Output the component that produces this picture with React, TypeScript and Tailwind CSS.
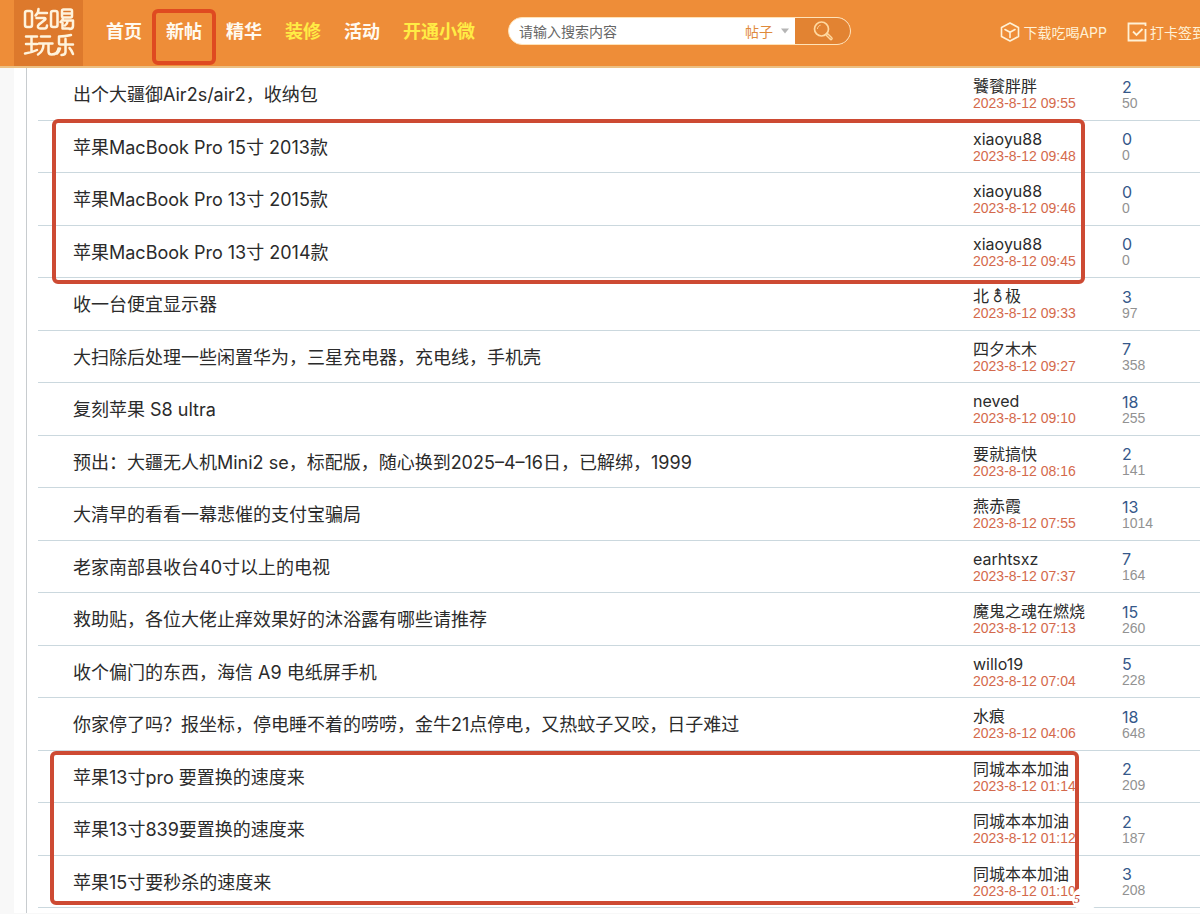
import React from "react";

type Post = {
  title: string;
  author: React.ReactNode;
  time: string;
  replies: number;
  views: number;
};

const posts: Post[] = [
  { title: "出个大疆御Air2s/air2，收纳包", author: "饕餮胖胖", time: "09:55", replies: 2, views: 50 },
  { title: "苹果MacBook Pro 15寸 2013款", author: "xiaoyu88", time: "09:48", replies: 0, views: 0 },
  { title: "苹果MacBook Pro 13寸 2015款", author: "xiaoyu88", time: "09:46", replies: 0, views: 0 },
  { title: "苹果MacBook Pro 13寸 2014款", author: "xiaoyu88", time: "09:45", replies: 0, views: 0 },
  {
    title: "收一台便宜显示器",
    author: (
      <>
        北<span className="inline-block w-[16px] text-center">⚨</span>极
      </>
    ),
    time: "09:33",
    replies: 3,
    views: 97,
  },
  { title: "大扫除后处理一些闲置华为，三星充电器，充电线，手机壳", author: "四夕木木", time: "09:27", replies: 7, views: 358 },
  { title: "复刻苹果 S8 ultra", author: "neved", time: "09:10", replies: 18, views: 255 },
  { title: "预出：大疆无人机Mini2 se，标配版，随心换到2025–4–16日，已解绑，1999", author: "要就搞快", time: "08:16", replies: 2, views: 141 },
  { title: "大清早的看看一幕悲催的支付宝骗局", author: "燕赤霞", time: "07:55", replies: 13, views: 1014 },
  { title: "老家南部县收台40寸以上的电视", author: "earhtsxz", time: "07:37", replies: 7, views: 164 },
  { title: "救助贴，各位大佬止痒效果好的沐浴露有哪些请推荐", author: "魔鬼之魂在燃烧", time: "07:13", replies: 15, views: 260 },
  { title: "收个偏门的东西，海信 A9 电纸屏手机", author: "willo19", time: "07:04", replies: 5, views: 228 },
  { title: "你家停了吗？报坐标，停电睡不着的唠唠，金牛21点停电，又热蚊子又咬，日子难过", author: "水痕", time: "04:06", replies: 18, views: 648 },
  { title: "苹果13寸pro 要置换的速度来", author: "同城本本加油", time: "01:14", replies: 2, views: 209 },
  { title: "苹果13寸839要置换的速度来", author: "同城本本加油", time: "01:12", replies: 2, views: 187 },
  { title: "苹果15寸要秒杀的速度来", author: "同城本本加油", time: "01:10", replies: 3, views: 208 },
];

const navItems = [
  { label: "首页", highlight: false, marked: false },
  { label: "新帖", highlight: false, marked: true },
  { label: "精华", highlight: false, marked: false },
  { label: "装修", highlight: true, marked: false },
  { label: "活动", highlight: false, marked: false },
  { label: "开通小微", highlight: true, marked: false },
];

function Logo() {
  return (
    <a href="#home" aria-label="吃喝玩乐" className="flex h-full w-[69px] shrink-0 items-center justify-center bg-[#dd792c]">
      <svg width="52" height="52" viewBox="0 0 52 52" fill="none" stroke="#fff3dc" strokeWidth="2.5" strokeLinecap="round" strokeLinejoin="round" aria-hidden="true">
        <path d="M4 4h3a2 2 0 0 1 2 2v12a2 2 0 0 1-2 2H4a2 2 0 0 1-2-2V6a2 2 0 0 1 2-2zM15.500 2c0 3-1 5-3 6.500M14.500 6H24M13.500 11h8c1.200 0 1.200 1 .4 1.800L16 17.500c-2 2-1.200 4 1 4h4.500c2 0 2.500-1 2.500-3" />
        <path d="M30 4h2.500a2 2 0 0 1 2 2v12a2 2 0 0 1-2 2H30a2 2 0 0 1-2-2V6a2 2 0 0 1 2-2zM40.500 2.500h7a1.500 1.500 0 0 1 1.500 1.500v5a1.500 1.500 0 0 1-1.500 1.500h-7A1.500 1.500 0 0 1 39 9V4a1.500 1.500 0 0 1 1.500-1.500zM39.500 6.500H49M40 11c0 2-1 3-2.500 4M39.500 13.500H50V19c0 2-1 3-3.500 3M39.500 16v5.500H46M44.500 14.500c0 2-1 3-2.500 4" />
        <path d="M3 29.500h11M3 37h11M8.500 30v14.500M2 46.500c4-.5 8-1.500 12-3.500M18 29.500h9M16 36.500h13.500M20.500 37c0 5-1.500 8-5.500 10.500M25.500 37v7.500c0 2 1 3 3 3 4 0 6.500-2 7-6" />
        <path d="M48 28c-4 1-8 1.500-12 1.500v6.500a1.500 1.500 0 0 0 1.500 1.500H50M42.500 32v13c0 2.200-1.500 3-4 3M37 41.500c-.5 2-1.500 3.500-3 5M46.500 41c1.500 1.500 2.500 3.500 3.500 6" />
      </svg>
    </a>
  );
}

function Header() {
  return (
    <header className="flex h-[68px] items-stretch overflow-hidden border-b-2 border-[#ecc083] bg-[#ee8d38] pl-[14px]">
      <Logo />
      <nav aria-label="主导航" className="ml-[23px] flex shrink-0 items-start gap-[23px] pt-[9px] text-[18px] leading-[46px] font-bold">
        {navItems.map((item) => (
          <a
            key={item.label}
            href={"#" + item.label}
            className={
              (item.marked ? "-mx-[13px] h-[56px] rounded-[6px] border-4 border-[#df4a20] px-[10px] leading-[38px] " : "") +
              (item.highlight ? "text-[#ffec45]" : "text-[#fffaf0]")
            }
          >
            {item.label}
          </a>
        ))}
      </nav>
      <form className="mt-[17px] ml-[33px] flex h-[28px] w-[343px] shrink-0 overflow-hidden rounded-full border border-[#ffe3b8] bg-white" onSubmit={(e) => e.preventDefault()}>
        <input
          aria-label="搜索内容"
          placeholder="请输入搜索内容"
          className="min-w-0 flex-1 pl-[10px] text-[14px] text-[#555] outline-none placeholder:text-[#666]"
        />
        <div className="relative flex items-center">
          <select aria-label="搜索类型" defaultValue="帖子" className="w-[50px] appearance-none bg-transparent text-[14px] text-[#df8a3c] outline-none">
            <option>帖子</option>
          </select>
          <svg className="pointer-events-none absolute right-[6px]" width="8" height="6" viewBox="0 0 8 6" aria-hidden="true">
            <path d="M0 0.500h8L4 5.500z" fill="#b5b5b5" />
          </svg>
        </div>
        <button type="submit" aria-label="搜索" className="flex w-[55px] items-center justify-center bg-[#e28332]">
          <svg width="22" height="22" viewBox="0 0 22 22" fill="none" stroke="#ffd9a0" aria-hidden="true">
            <circle cx="9.500" cy="9" r="7" strokeWidth="1.700" />
            <path d="M5.500 8.500c.3-1.700 1.200-2.700 2.700-3.200" strokeWidth="1" strokeLinecap="round" />
            <path d="M15 14.500l4 4" strokeWidth="3.600" strokeLinecap="round" />
            <path d="M15.500 15l3.300 3.300" stroke="#e28332" strokeWidth="1" strokeLinecap="round" />
          </svg>
        </button>
      </form>
      <div className="-mr-[6px] ml-auto flex h-[64px] shrink-0 items-center gap-[20px] text-[14px] whitespace-nowrap text-[#fff1d6]">
        <a href="#app" className="flex items-center gap-[3px]">
          <svg width="20" height="20" viewBox="0 0 20 20" fill="none" stroke="currentColor" strokeWidth="1.600" strokeLinejoin="round" strokeLinecap="round" aria-hidden="true">
            <path d="M10 1l8.500 4.500v9L10 19l-8.500-4.500v-9zM5 7.500l5 2.700 5-2.700M10 10.200v5.300" />
          </svg>
          下载吃喝APP
        </a>
        <a href="#checkin" className="flex items-center gap-[3px]">
          <svg width="20" height="20" viewBox="0 0 20 20" fill="none" stroke="currentColor" strokeWidth="1.800" aria-hidden="true">
            <path d="M18.500 4V1.500h-17v17h17V7M6 9.500l3.500 3.500 6-6" />
          </svg>
          打卡签到
        </a>
      </div>
    </header>
  );
}

export default function App() {
  return (
    <div className="min-h-screen overflow-hidden bg-[#f8f8f8] font-['Inter','Noto_Sans_CJK_SC',sans-serif] text-[#2b2b2b]">
      <Header />
      <main className="ml-[14px] bg-white pl-[12px]">
        <div className="relative border-l border-[#c8cccf] pb-[5px] pl-[11px]">
          <table className="w-full table-fixed border-separate border-spacing-0 text-left">
            <colgroup>
              <col />
              <col className="w-[149px]" />
              <col className="w-[78px]" />
            </colgroup>
            <tbody>
              {posts.map((post) => (
                <tr key={post.title} className="h-[52px] odd:h-[53px]">
                  <td className="border-b border-[#cbd8de] pt-[2px] pl-[35px] text-[18px] leading-[24px]">
                    <a href="#post">{post.title}</a>
                  </td>
                  <td className="border-b border-[#cbd8de] whitespace-nowrap">
                    <a href="#user" className="block text-[16px] leading-[18px]">{post.author}</a>
                    <time className="block font-['Liberation_Sans',sans-serif] text-[14px] leading-[16px] text-[#d4694c]">
                      2023-8-12 {post.time}
                    </time>
                  </td>
                  <td className="border-b border-[#cbd8de] pb-[1px]">
                    <a href="#replies" className="block text-[16px] leading-[18px] text-[#35588a]">{post.replies}</a>
                    <span className="block font-['Liberation_Sans',sans-serif] text-[14px] leading-[14px] text-[#929292]">{post.views}</span>
                  </td>
                </tr>
              ))}
            </tbody>
          </table>
          <div className="pointer-events-none absolute top-[51px] right-[115px] left-[25px] h-[165px] rounded-[6px] border-4 border-[#cd4a33]" />
          <div className="pointer-events-none absolute top-[683px] right-[121px] left-[23px] h-[154px] rounded-[6px] border-4 border-[#cd4a33]" />
          <span className="absolute right-[102px] bottom-[3px] flex h-[22px] w-[26px] items-center rounded-full bg-white pl-[2px] font-['Liberation_Serif',serif] text-[12px] text-[#c23a28] italic">
            5
          </span>
        </div>
      </main>
    </div>
  );
}
